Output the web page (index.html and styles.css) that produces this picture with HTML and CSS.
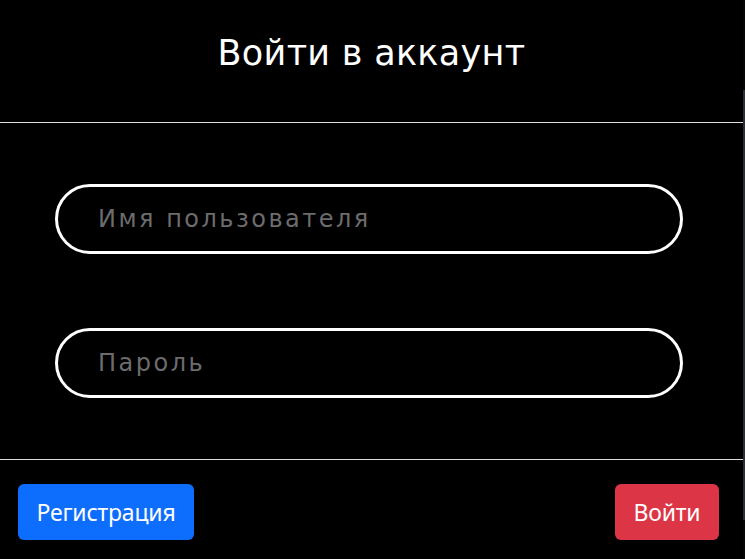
FILE: index.html
```html
<!DOCTYPE html>
<html lang="ru">
<head>
<meta charset="utf-8">
<title>Войти в аккаунт</title>
<link rel="stylesheet" href="styles.css">
</head>
<body>
<div class="page">
  <form class="modal">
    <header class="modal-header">
      <h1 class="modal-title">Войти в аккаунт</h1>
    </header>
    <section class="modal-body">
      <input class="field" type="text" placeholder="Имя пользователя">
      <input class="field" type="password" placeholder="Пароль">
    </section>
    <footer class="modal-footer">
      <button type="button" class="btn btn-primary">Регистрация</button>
      <button type="submit" class="btn btn-danger">Войти</button>
    </footer>
  </form>
  <div class="edge"><div class="edge-bar"></div></div>
</div>
</body>
</html>
```
FILE: styles.css
```css
* { box-sizing: border-box; }

html, body {
  margin: 0;
  padding: 0;
  background: #000;
  height: 100%;
}

.page {
  display: flex;
  width: 745px;
  height: 559px;
  overflow: hidden;
}

.modal {
  width: 743px;
  display: flex;
  flex-direction: column;
  background: #000;
  color: #fff;
}

.modal-header {
  height: 123px;
  border-bottom: 1px solid #dcdcdc;
  display: flex;
  justify-content: center;
  padding-top: 32px;
}

.modal-title {
  margin: 0;
  font-family: "DejaVu Sans", "Open Sans", sans-serif;
  font-weight: normal;
  font-size: 35px;
  line-height: 42px;
  letter-spacing: 0.3px;
}

.modal-body {
  height: 337px;
  border-bottom: 1px solid #dcdcdc;
  display: flex;
  flex-direction: column;
  padding: 61px 0 0 55px;
  gap: 74px;
}

.field {
  width: 628px;
  height: 70px;
  border: 3px solid #fff;
  border-radius: 35px;
  background: #000;
  color: #fff;
  padding: 0 0 0 40px;
  font-family: "DejaVu Sans", "Open Sans", sans-serif;
  font-size: 24px;
  letter-spacing: 2.5px;
  outline: none;
}

.field::placeholder {
  color: #6c6c6c;
}

.modal-footer {
  flex: 1;
  display: flex;
  justify-content: space-between;
  align-items: flex-start;
  padding: 24px 24px 0 18px;
}

.btn {
  height: 56px;
  border: none;
  border-radius: 6px;
  padding: 0;
  color: #fff;
  font-family: "Noto Sans", "Open Sans", sans-serif;
  font-size: 23px;
  letter-spacing: -0.2px;
}

.btn-primary { background: #0d6efd; width: 176px; }
.btn-danger { background: #dc3545; width: 104px; }

.edge {
  width: 2px;
  background: #050505;
  padding-top: 90px;
}

.edge-bar {
  height: 430px;
  background: #2a2d33;
}
```
